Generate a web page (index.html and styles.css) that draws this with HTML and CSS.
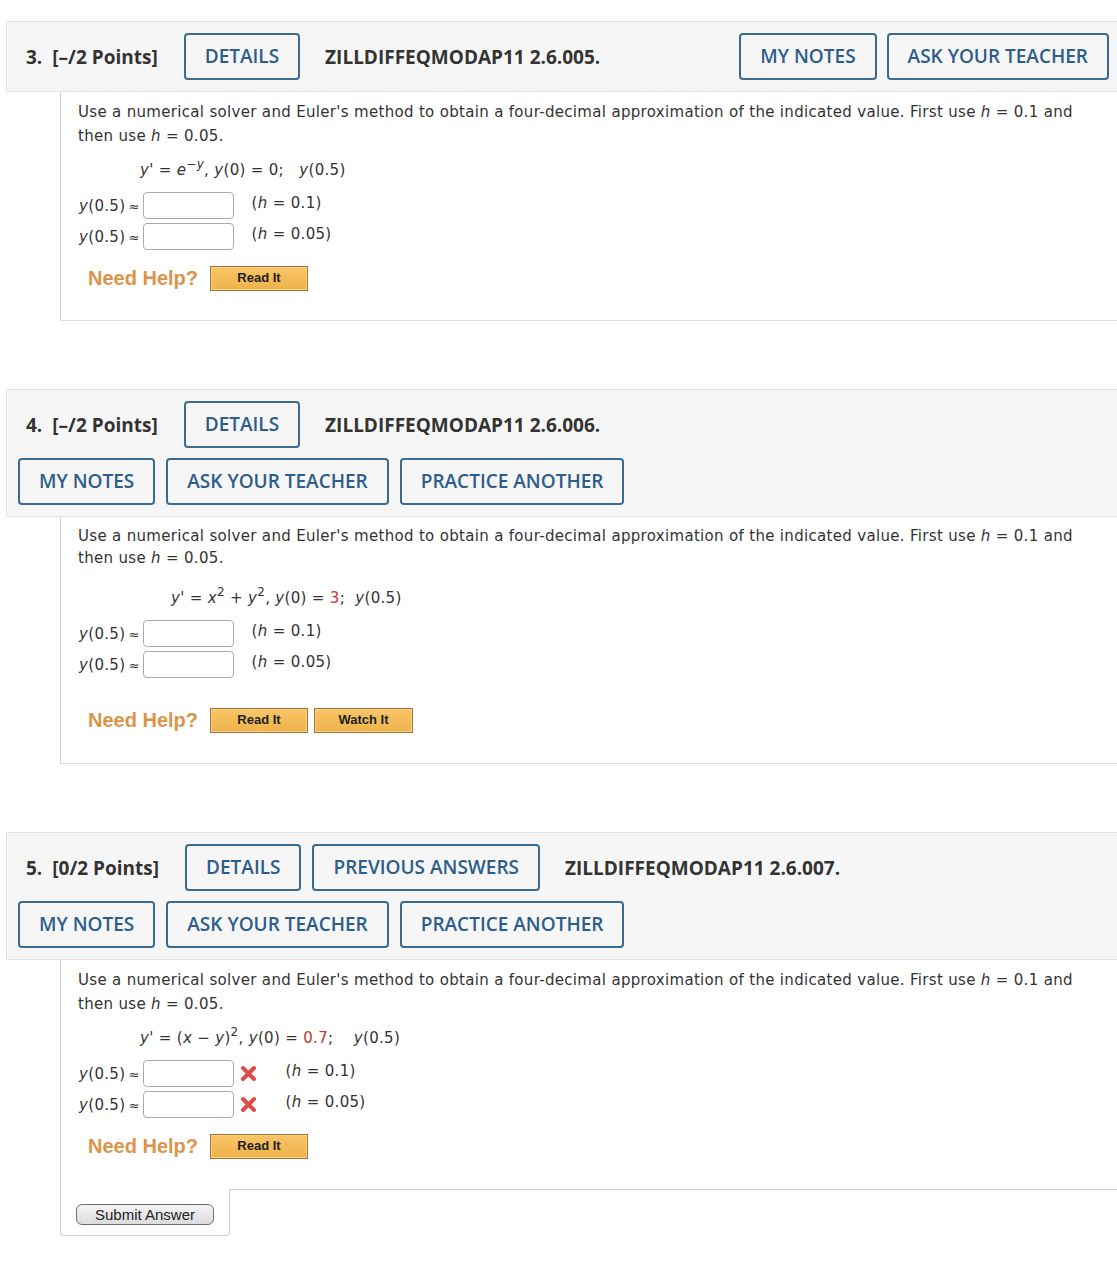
FILE: index.html
```html
<!DOCTYPE html>
<html>
<head>
<meta charset="utf-8">
<link rel="stylesheet" href="styles.css">
</head>
<body>
<div class="page">

  <section class="q q3">
    <div class="qhead">
      <div class="row">
        <span class="label"><span class="num">3.</span>[–/2 Points]</span>
        <span class="btn">DETAILS</span>
        <span class="code">ZILLDIFFEQMODAP11 2.6.005.</span>
        <span class="right">
          <span class="btn">MY NOTES</span>
          <span class="btn">ASK YOUR TEACHER</span>
        </span>
      </div>
    </div>
    <div class="qbody">
      <p class="prompt">Use a numerical solver and Euler's method to obtain a four-decimal approximation of the indicated value. First use <i>h</i> = 0.1 and then use <i>h</i> = 0.05.</p>
      <div class="eq eq3"><i>y</i>' = <i>e</i><sup>−<i>y</i></sup>, <i>y</i>(0) = 0;&nbsp;&nbsp; <i>y</i>(0.5)</div>
      <div class="ans"><span class="lbl"><i>y</i>(0.5)<span class="approx">≈</span></span><span class="box"></span><span class="hint">(<i>h</i> = 0.1)</span></div>
      <div class="ans"><span class="lbl"><i>y</i>(0.5)<span class="approx">≈</span></span><span class="box"></span><span class="hint">(<i>h</i> = 0.05)</span></div>
      <div class="help"><span class="need">Need Help?</span><span class="hbtn">Read It</span></div>
    </div>
  </section>

  <section class="q q4">
    <div class="qhead">
      <div class="row">
        <span class="label"><span class="num">4.</span>[–/2 Points]</span>
        <span class="btn">DETAILS</span>
        <span class="code">ZILLDIFFEQMODAP11 2.6.006.</span>
      </div>
      <div class="row row2">
        <span class="btn">MY NOTES</span>
        <span class="btn">ASK YOUR TEACHER</span>
        <span class="btn">PRACTICE ANOTHER</span>
      </div>
    </div>
    <div class="qbody body4">
      <p class="prompt">Use a numerical solver and Euler's method to obtain a four-decimal approximation of the indicated value. First use <i>h</i> = 0.1 and then use <i>h</i> = 0.05.</p>
      <div class="eq eq4"><i>y</i>' = <i>x</i><sup>2</sup> + <i>y</i><sup>2</sup>, <i>y</i>(0) = <span class="red">3</span>;&nbsp; <i>y</i>(0.5)</div>
      <div class="ans"><span class="lbl"><i>y</i>(0.5)<span class="approx">≈</span></span><span class="box"></span><span class="hint">(<i>h</i> = 0.1)</span></div>
      <div class="ans"><span class="lbl"><i>y</i>(0.5)<span class="approx">≈</span></span><span class="box"></span><span class="hint">(<i>h</i> = 0.05)</span></div>
      <div class="help help4"><span class="need">Need Help?</span><span class="hbtn">Read It</span><span class="hbtn">Watch It</span></div>
    </div>
  </section>

  <section class="q q5">
    <div class="qhead">
      <div class="row row1">
        <span class="label"><span class="num">5.</span>[0/2 Points]</span>
        <span class="btn">DETAILS</span>
        <span class="btn">PREVIOUS ANSWERS</span>
        <span class="code">ZILLDIFFEQMODAP11 2.6.007.</span>
      </div>
      <div class="row row2">
        <span class="btn">MY NOTES</span>
        <span class="btn">ASK YOUR TEACHER</span>
        <span class="btn">PRACTICE ANOTHER</span>
      </div>
    </div>
    <div class="qbody last">
      <p class="prompt">Use a numerical solver and Euler's method to obtain a four-decimal approximation of the indicated value. First use <i>h</i> = 0.1 and then use <i>h</i> = 0.05.</p>
      <div class="eq eq3"><i>y</i>' = (<i>x</i> − <i>y</i>)<sup>2</sup>, <i>y</i>(0) = <span class="red">0.7</span>;&nbsp;&nbsp;&nbsp; <i>y</i>(0.5)</div>
      <div class="ans"><span class="lbl"><i>y</i>(0.5)<span class="approx">≈</span></span><span class="box"></span><svg class="x" width="17" height="17" viewBox="0 0 17 17"><path d="M3 3L14 14M14 3L3 14" stroke="#dd4a48" stroke-width="4" stroke-linecap="round"/></svg><span class="hint wide">(<i>h</i> = 0.1)</span></div>
      <div class="ans"><span class="lbl"><i>y</i>(0.5)<span class="approx">≈</span></span><span class="box"></span><svg class="x" width="17" height="17" viewBox="0 0 17 17"><path d="M3 3L14 14M14 3L3 14" stroke="#dd4a48" stroke-width="4" stroke-linecap="round"/></svg><span class="hint wide">(<i>h</i> = 0.05)</span></div>
      <div class="help"><span class="need">Need Help?</span><span class="hbtn">Read It</span></div>
    </div>
    <div class="submitrow">
      <div class="submitbox"><span class="submit">Submit Answer</span></div>
      <div class="filler"></div>
    </div>
  </section>

</div>
</body>
</html>
```

FILE: styles.css
```css
html, body {
  margin: 0;
  padding: 0;
  background: #ffffff;
}
body {
  padding-top: 21px;
  overflow-x: hidden;
  font-family: "DejaVu Sans", Verdana, sans-serif;
  color: #333333;
}
.page {
  margin-left: 6px;
  width: 1140px;
}
.q + .q {
  margin-top: 68px;
}
.qhead {
  background: #f6f6f6;
  border: 1px solid #e2e2e2;
  padding: 11px 36px 11px 11px;
  font-family: "Open Sans", sans-serif;
}
.row {
  display: flex;
  align-items: center;
}
.row2 {
  margin-top: 10px;
}
.row2 .btn {
  margin-right: 11px;
}
.label {
  font-weight: 700;
  font-size: 19px;
  color: #333;
  margin-left: 8px;
  margin-right: 26px;
  white-space: nowrap;
}
.num {
  margin-right: 10px;
}
.btn {
  display: inline-block;
  box-sizing: border-box;
  height: 47px;
  line-height: 43px;
  padding: 0 19px;
  border: 2px solid #3c6b91;
  border-radius: 4px;
  color: #2d5d8a;
  font-weight: 600;
  font-size: 19px;
  white-space: nowrap;
}
.row1 .btn + .btn {
  margin-left: 11px;
}
.code {
  font-weight: 700;
  font-size: 19px;
  color: #333;
  margin-left: 25px;
  white-space: nowrap;
}
.right {
  margin-left: auto;
  display: flex;
  gap: 10px;
}
.qbody {
  margin-left: 54px;
  border-left: 1px solid #cfcfcf;
  border-bottom: 1px solid #dedede;
  padding: 8px 0 29px 17px;
  font-size: 15px;
  letter-spacing: 0.32px;
}
.qbody.last {
  border-bottom: none;
  padding-bottom: 30px;
}
.prompt {
  margin: 0;
  line-height: 24px;
  width: 1010px;
}
.body4 .prompt {
  line-height: 22px;
}
.body4 {
  padding-bottom: 30px;
}
.eq {
  line-height: 24px;
  margin-top: 10px;
  margin-bottom: 8px;
  padding-left: 62px;
}
.eq4 {
  padding-left: 93px;
  margin-top: 17px;
}
sup {
  font-size: 12px;
  line-height: 0;
  vertical-align: 7px;
}
.red {
  color: #c0392b;
}
.ans {
  display: flex;
  align-items: center;
  height: 31px;
}
.lbl {
  margin-left: 1px;
  white-space: nowrap;
}
.approx {
  font-size: 13px;
  margin-left: 3px;
}
.box {
  display: inline-block;
  box-sizing: border-box;
  width: 91px;
  height: 27px;
  border: 1px solid #ababab;
  border-radius: 4px;
  margin-left: 3px;
  background: #fff;
}
.hint {
  margin-left: 18px;
  margin-top: -6px;
}
.hint.wide {
  margin-left: 29px;
}
.x {
  margin-left: 6px;
}
.help {
  display: flex;
  align-items: center;
  margin-top: 14px;
  padding-left: 10px;
  height: 25px;
  letter-spacing: 0;
}
.help4 {
  margin-top: 28px;
}
.need {
  font-family: "Liberation Sans", Arial, sans-serif;
  font-weight: 700;
  font-size: 20px;
  color: #dc9448;
  margin-right: 12px;
}
.hbtn {
  display: inline-block;
  box-sizing: border-box;
  width: 98px;
  height: 25px;
  line-height: 21px;
  text-align: center;
  border: 1px solid #a8702f;
  box-shadow: inset 0 0 0 1px #f7d48c;
  background: linear-gradient(#f8c567, #efb24b);
  font-family: "Liberation Sans", Arial, sans-serif;
  font-weight: 700;
  font-size: 13px;
  color: #1e1e1e;
  margin-right: 6px;
}
.hbtn + .hbtn {
  width: 99px;
}
.submitrow {
  display: flex;
}
.submitbox {
  margin-left: 54px;
  width: 170px;
  box-sizing: border-box;
  border: 1px solid #cfcfcf;
  border-top: none;
  border-radius: 0 0 4px 4px;
  padding: 15px 0 10px 15px;
}
.submit {
  display: inline-block;
  box-sizing: border-box;
  width: 138px;
  height: 21px;
  line-height: 19px;
  text-align: center;
  border: 1px solid #6e6e6e;
  border-radius: 6px;
  background: linear-gradient(#f4f4f4, #dcdcdc);
  font-family: "Liberation Sans", Arial, sans-serif;
  font-size: 15px;
  color: #222;
}
.filler {
  flex: 1;
  border-top: 1px solid #cfcfcf;
}
```
